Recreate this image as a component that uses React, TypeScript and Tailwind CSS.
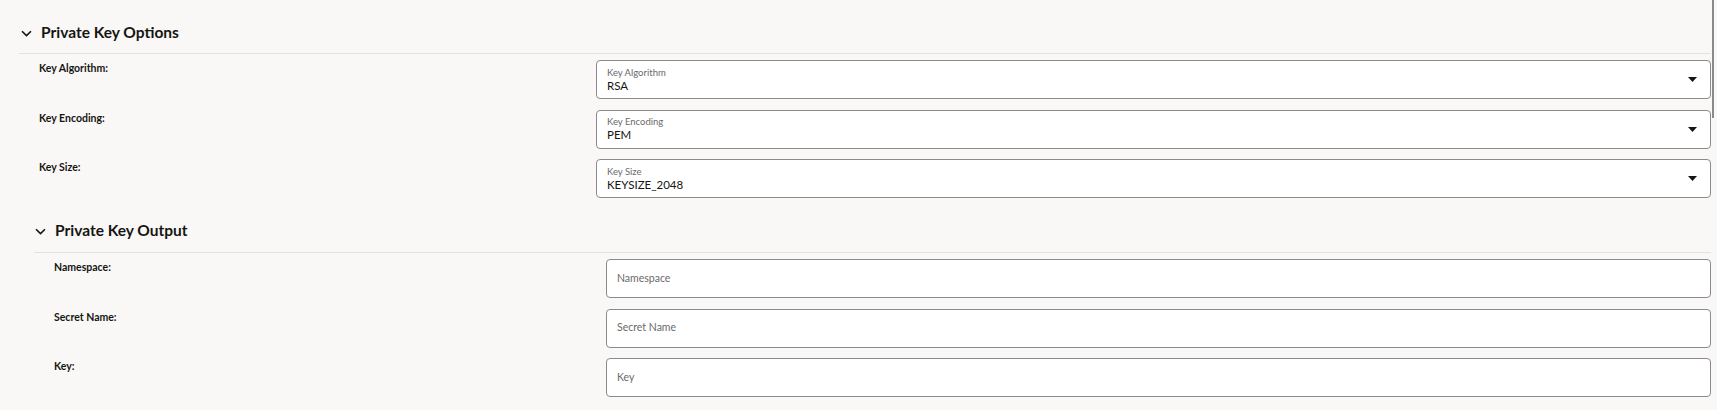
import React from "react";

const font = { fontFamily: 'Lato, "Noto Sans", Arial, sans-serif' };

function Chevron() {
  return (
    <svg width="11" height="7" viewBox="0 0 11 7" className="shrink-0">
      <path d="M1 1.2 L5.5 5.6 L10 1.2" fill="none" stroke="#161513" strokeWidth="1.6" />
    </svg>
  );
}

function Caret() {
  return (
    <svg width="9" height="5" viewBox="0 0 9 5" className="shrink-0">
      <path d="M0 0 H9 L4.5 5 Z" fill="#161513" />
    </svg>
  );
}

function SelectBox({ label, value }: { label: string; value: string }) {
  return (
    <div className="flex-1 h-[39px] bg-white border border-[#8b8b8b] rounded-[4px] flex items-center pl-[10px] pr-[13px]">
      <div className="flex-1 flex flex-col justify-center">
        <div className="text-[9.5px] leading-[12px] text-[#6a6a6a]">{label}</div>
        <div className="text-[11.5px] leading-[14px] text-[#161513]">{value}</div>
      </div>
      <Caret />
    </div>
  );
}

function InputBox({ placeholder }: { placeholder: string }) {
  return (
    <div className="flex-1 h-[39px] bg-white border border-[#8b8b8b] rounded-[4px] flex items-center pl-[10px]">
      <span className="text-[10.5px] text-[#6a6a6a]">{placeholder}</span>
    </div>
  );
}

function Row({ label, labelW, children }: { label: string; labelW: string; children: React.ReactNode }) {
  return (
    <div className="flex">
      <div className={`${labelW} shrink-0 pl-[20px] pt-[1px] text-[10.5px] leading-[14px] font-bold text-[#161513]`}>{label}</div>
      {children}
    </div>
  );
}

export default function App() {
  return (
    <div className="relative w-full h-[410px] bg-[#f9f8f6] overflow-hidden" style={font}>
      <div className="pl-[19px] pr-[6px]">
        <div className="pt-[20px] border-b border-[#e3e2df] h-[54px]">
          <div className="h-[26px] flex items-center gap-[9px] pl-[2px]">
            <Chevron />
            <span className="text-[15.5px] font-bold text-[#161513]">Private Key Options</span>
          </div>
        </div>
        <div className="flex flex-col gap-[10.5px] pt-[6px]">
          <Row label="Key Algorithm:" labelW="w-[577px]">
            <SelectBox label="Key Algorithm" value="RSA" />
          </Row>
          <Row label="Key Encoding:" labelW="w-[577px]">
            <SelectBox label="Key Encoding" value="PEM" />
          </Row>
          <Row label="Key Size:" labelW="w-[577px]">
            <SelectBox label="Key Size" value="KEYSIZE_2048" />
          </Row>
        </div>
        <div className="pl-[15px]">
          <div className="pt-[19px] border-b border-[#e3e2df] h-[55px]">
            <div className="h-[28px] flex items-center gap-[9px] pl-[1px]">
              <Chevron />
              <span className="text-[15.5px] font-bold text-[#161513]">Private Key Output</span>
            </div>
          </div>
          <div className="flex flex-col gap-[10.5px] pt-[6px]">
            <Row label="Namespace:" labelW="w-[572px]">
              <InputBox placeholder="Namespace" />
            </Row>
            <Row label="Secret Name:" labelW="w-[572px]">
              <InputBox placeholder="Secret Name" />
            </Row>
            <Row label="Key:" labelW="w-[572px]">
              <InputBox placeholder="Key" />
            </Row>
          </div>
        </div>
      </div>
      <div className="absolute right-[3px] top-0 w-[2px] h-[118px] bg-[#8a8a8a]" />
    </div>
  );
}
